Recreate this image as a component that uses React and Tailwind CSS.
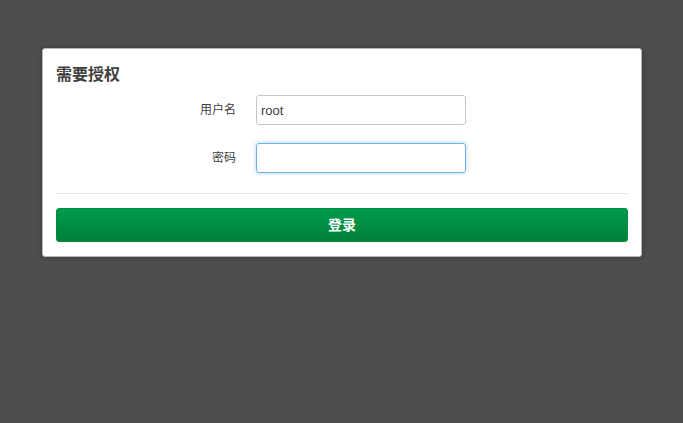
import React from 'react';

export default function App() {
  return (
    <div className="min-h-[423px] bg-[#4d4d4d] pt-[48px] px-[42px]" style={{ fontFamily: '"Liberation Sans", "Noto Sans CJK SC", sans-serif' }}>
      <div className="w-[600px] bg-white border border-[#b8b8b8] rounded-[3px] shadow-[0_0_4px_rgba(0,0,0,0.3)] px-[13px] pt-[16px] pb-[14px]">
        <h2 className="text-[16px] leading-[20px] font-bold text-[#404040]">需要授权</h2>

        {/* login fields */}
        <div className="mt-[10px] flex flex-col gap-[18px]">
          <div className="flex items-center">
            <label className="w-[180px] text-right text-[12px] text-[#404040]">用户名</label>
            <input
              defaultValue="root"
              className="ml-[20px] w-[210px] h-[30px] px-[4px] text-[13px] text-[#404040] border border-[#c8c8c8] rounded-[3px] outline-none"
            />
          </div>
          <div className="flex items-center">
            <label className="w-[180px] text-right text-[12px] text-[#404040]">密码</label>
            <input
              type="password"
              className="ml-[20px] w-[210px] h-[30px] px-[4px] text-[13px] border border-[#6ab2f0] rounded-[3px] outline-none shadow-[0_0_4px_rgba(82,168,236,0.5)]"
            />
          </div>
        </div>

        <div className="mt-[20px] border-t border-[#e5e5e5]" />

        <button className="mt-[14px] w-full h-[34px] rounded-[3px] border border-[#008a40] bg-gradient-to-b from-[#009c4d] to-[#007f38] text-white text-[14px] font-bold">
          登录
        </button>
      </div>
    </div>
  );
}
